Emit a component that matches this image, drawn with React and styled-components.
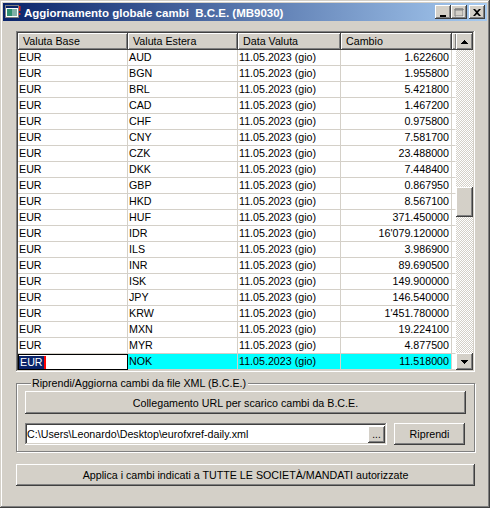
import React from 'react'
import { styled, createGlobalStyle } from 'styled-components'

const GlobalStyle = createGlobalStyle`
  html, body { margin: 0; padding: 0; background: #d4d0c8; }
  body { font-family: "Liberation Sans", Arial, sans-serif; font-size: 10.7px; color: #000; }
`

const rates = [
  ['AUD', '1.622600'], ['BGN', '1.955800'], ['BRL', '5.421800'], ['CAD', '1.467200'],
  ['CHF', '0.975800'], ['CNY', '7.581700'], ['CZK', '23.488000'], ['DKK', '7.448400'],
  ['GBP', '0.867950'], ['HKD', '8.567100'], ['HUF', '371.450000'], ['IDR', "16'079.120000"],
  ['ILS', '3.986900'], ['INR', '89.690500'], ['ISK', '149.900000'], ['JPY', '146.540000'],
  ['KRW', "1'451.780000"], ['MXN', '19.224100'], ['MYR', '4.877500'], ['NOK', '11.518000'],
]

const cols = '110px 110px 103px 111px 1fr'

const raised = `
  box-shadow: inset -1px -1px #404040, inset 1px 1px #fff, inset -2px -2px #808080, inset 2px 2px #d4d0c8;
`
const sunken = `
  box-shadow: inset -1px -1px #fff, inset 1px 1px #808080, inset -2px -2px #d4d0c8, inset 2px 2px #404040;
`

const Window = styled.div`
  width: 490px;
  height: 508px;
  box-sizing: border-box;
  padding: 3px;
  background: #d4d0c8;
  box-shadow: inset -1px -1px #404040, inset 1px 1px #d4d0c8, inset -2px -2px #808080, inset 2px 2px #fff;
  display: flex;
  flex-direction: column;
`

const TitleBar = styled.div`
  height: 18px;
  display: flex;
  align-items: center;
  padding: 0 2px 0 2px;
  background: linear-gradient(to right, #0a246a, #a6caf0);
  color: #fff;
`

const TitleText = styled.div`
  flex: 1;
  font-weight: bold;
  font-size: 11.5px;
  white-space: pre;
  margin-left: 3px;
  padding-top: 1px;
`

const CaptionButtons = styled.div`
  display: flex;
`

const CaptionButton = styled.div`
  width: 16px;
  height: 14px;
  margin-left: ${p => p.$gap || 0}px;
  box-sizing: border-box;
  background: #d4d0c8;
  ${raised}
  display: flex;
  align-items: center;
  justify-content: center;
`

const Body = styled.div`
  flex: 1;
  display: flex;
  flex-direction: column;
  padding: 10px 12px 0 13px;
`

const ListView = styled.div`
  height: 341px;
  box-sizing: border-box;
  padding: 2px;
  background: #fff;
  ${sunken}
  display: flex;
`

const Table = styled.div`
  flex: 1;
  display: flex;
  flex-direction: column;
  overflow: hidden;
`

const HeaderRow = styled.div`
  display: grid;
  grid-template-columns: ${cols};
  height: 17px;
`

const HeaderCell = styled.div`
  box-sizing: border-box;
  background: #d4d0c8;
  box-shadow: inset -1px -1px #404040, inset 1px 1px #fff, inset -2px -2px #808080;
  padding: 2px 0 0 5px;
  white-space: nowrap;
  overflow: hidden;
`

const Row = styled.div`
  display: grid;
  grid-template-columns: ${cols};
  height: 16px;
  background: ${p => (p.$selected ? '#00ffff' : '#fff')};
`

const Cell = styled.div`
  box-sizing: border-box;
  border-right: 1px solid ${p => (p.$filler ? 'transparent' : '#d4d0c8')};
  border-bottom: 1px solid #d4d0c8;
  background: ${p => (p.$filler ? '#fff' : 'transparent')};
  padding: 1px 2px 0 ${p => (p.$right ? 0 : 1)}px;
  text-align: ${p => (p.$right ? 'right' : 'left')};
  white-space: nowrap;
  overflow: hidden;
`

const FocusCell = styled.div`
  box-sizing: border-box;
  border: 1px solid #000;
  background: #fff;
  display: flex;
  align-items: center;
`

const Highlight = styled.span`
  background: #0a246a;
  color: #fff;
  line-height: 13px;
  padding: 0 1px 0 1px;
`

const Caret = styled.span`
  flex: none;
  display: block;
  width: 2px;
  height: 13px;
  background: #ff0000;
`

const ScrollBar = styled.div`
  width: 17px;
  display: flex;
  flex-direction: column;
`

const ScrollButton = styled.div`
  width: 17px;
  height: 17px;
  box-sizing: border-box;
  background: #d4d0c8;
  ${raised}
  display: flex;
  align-items: center;
  justify-content: center;
`

const Track = styled.div`
  flex: 1;
  background-color: #fff;
  background-image: conic-gradient(#d4d0c8 25%, #fff 0 50%, #d4d0c8 0 75%, #fff 0);
  background-size: 2px 2px;
  display: flex;
  flex-direction: column;
`

const Thumb = styled.div`
  margin-top: ${p => p.$offset}px;
  height: 30px;
  background: #d4d0c8;
  ${raised}
`

const Group = styled.fieldset`
  margin: 5px 0 0 0;
  padding: 2px 8px 6px 8px;
  border: 1px solid #808080;
  box-shadow: inset 1px 1px #fff, 1px 1px #fff;
  display: flex;
  flex-direction: column;
  gap: 9px;
`

const Legend = styled.legend`
  margin-left: 6px;
  padding: 0 2px 0 1px;
  background: #d4d0c8;
`

const Button = styled.div`
  height: ${p => p.$h || 23}px;
  width: ${p => (p.$w ? p.$w + 'px' : 'auto')};
  box-sizing: border-box;
  background: #d4d0c8;
  ${raised}
  display: flex;
  align-items: center;
  justify-content: center;
  white-space: nowrap;
`

const FileRow = styled.div`
  display: flex;
  gap: 7px;
  margin-right: 1px;
`

const TextBox = styled.div`
  flex: 1;
  height: 22px;
  box-sizing: border-box;
  padding: 2px;
  background: #fff;
  ${sunken}
  display: flex;
  align-items: center;
`

const TextValue = styled.div`
  flex: 1;
  white-space: nowrap;
`

const Ellipsis = styled.div`
  width: 17px;
  height: 17px;
  box-sizing: border-box;
  background: #d4d0c8;
  ${raised}
  display: flex;
  align-items: flex-end;
  justify-content: center;
  padding-bottom: 3px;
  font-size: 10px;
  line-height: 10px;
`

const ApplyButton = styled(Button)`
  margin-top: 12px;
  height: 22px;
`

const Arrow = ({ up }) => (
  <svg width="7" height="4" viewBox="0 0 7 4">
    <path d={up ? 'M3 0h1v1h1v1h1v1h1v1H0V3h1V2h1V1h1z' : 'M0 0h7v1H6v1H5v1H4v1H3V3H2V2H1V1H0z'} fill="#000" />
  </svg>
)

const AppIcon = () => (
  <svg width="16" height="14" viewBox="0 0 16 14">
    <rect x="0.5" y="0.5" width="13" height="12" fill="#fff" stroke="#808080" />
    <rect x="1" y="1" width="12" height="2" fill="#0a246a" />
    <rect x="2" y="4" width="5" height="7" fill="#2f8f6f" />
    <rect x="7" y="4" width="5" height="7" fill="#7fb0a8" />
    <rect x="14" y="1" width="1.5" height="5" fill="#e02020" />
    <rect x="14" y="8" width="1.5" height="2" fill="#e02020" />
  </svg>
)

const App = () => {
  return (
    <>
      <GlobalStyle />
      <Window>
        <TitleBar>
          <AppIcon />
          <TitleText>Aggiornamento globale cambi  B.C.E. (MB9030)</TitleText>
          <CaptionButtons>
            <CaptionButton>
              <svg width="8" height="9" viewBox="0 0 8 9"><rect x="1" y="7" width="6" height="2" fill="#000" /></svg>
            </CaptionButton>
            <CaptionButton>
              <svg width="10" height="9" viewBox="0 0 10 9">
                <path d="M1 1h8v7H1z M1 1h8v1H1z" fill="none" stroke="#808080" strokeWidth="1" />
                <path d="M2 9h8V2" fill="none" stroke="#fff" strokeWidth="1" />
              </svg>
            </CaptionButton>
            <CaptionButton $gap={2}>
              <svg width="8" height="7" viewBox="0 0 8 7">
                <path d="M0 0h2l2 2 2-2h2L5 3.5 8 7H6L4 5 2 7H0l3-3.5z" fill="#000" />
              </svg>
            </CaptionButton>
          </CaptionButtons>
        </TitleBar>

        <Body>
          <ListView>
            <Table>
              <HeaderRow>
                <HeaderCell>Valuta Base</HeaderCell>
                <HeaderCell>Valuta Estera</HeaderCell>
                <HeaderCell>Data Valuta</HeaderCell>
                <HeaderCell>Cambio</HeaderCell>
                <HeaderCell />
              </HeaderRow>
              {rates.map(([code, value], i) => {
                const selected = i === rates.length - 1
                return (
                  <Row key={code} $selected={selected}>
                    {selected ? (
                      <FocusCell>
                        <Highlight>EUR</Highlight>
                        <Caret />
                      </FocusCell>
                    ) : (
                      <Cell>EUR</Cell>
                    )}
                    <Cell>{code}</Cell>
                    <Cell>11.05.2023 (gio)</Cell>
                    <Cell $right>{value}</Cell>
                    <Cell $filler />
                  </Row>
                )
              })}
            </Table>
            <ScrollBar>
              <ScrollButton><Arrow up /></ScrollButton>
              <Track>
                <Thumb $offset={137} />
              </Track>
              <ScrollButton><Arrow /></ScrollButton>
            </ScrollBar>
          </ListView>

          <Group>
            <Legend>Riprendi/Aggiorna cambi da file XML (B.C.E.)</Legend>
            <Button>Collegamento URL per scarico cambi da B.C.E.</Button>
            <FileRow>
              <TextBox>
                <TextValue>C:\Users\Leonardo\Desktop\eurofxref-daily.xml</TextValue>
                <Ellipsis>...</Ellipsis>
              </TextBox>
              <Button $w={71} $h={22}>Riprendi</Button>
            </FileRow>
          </Group>

          <ApplyButton>Applica i cambi indicati a TUTTE LE SOCIETÀ/MANDATI autorizzate</ApplyButton>
        </Body>
      </Window>
    </>
  )
}

export default App
